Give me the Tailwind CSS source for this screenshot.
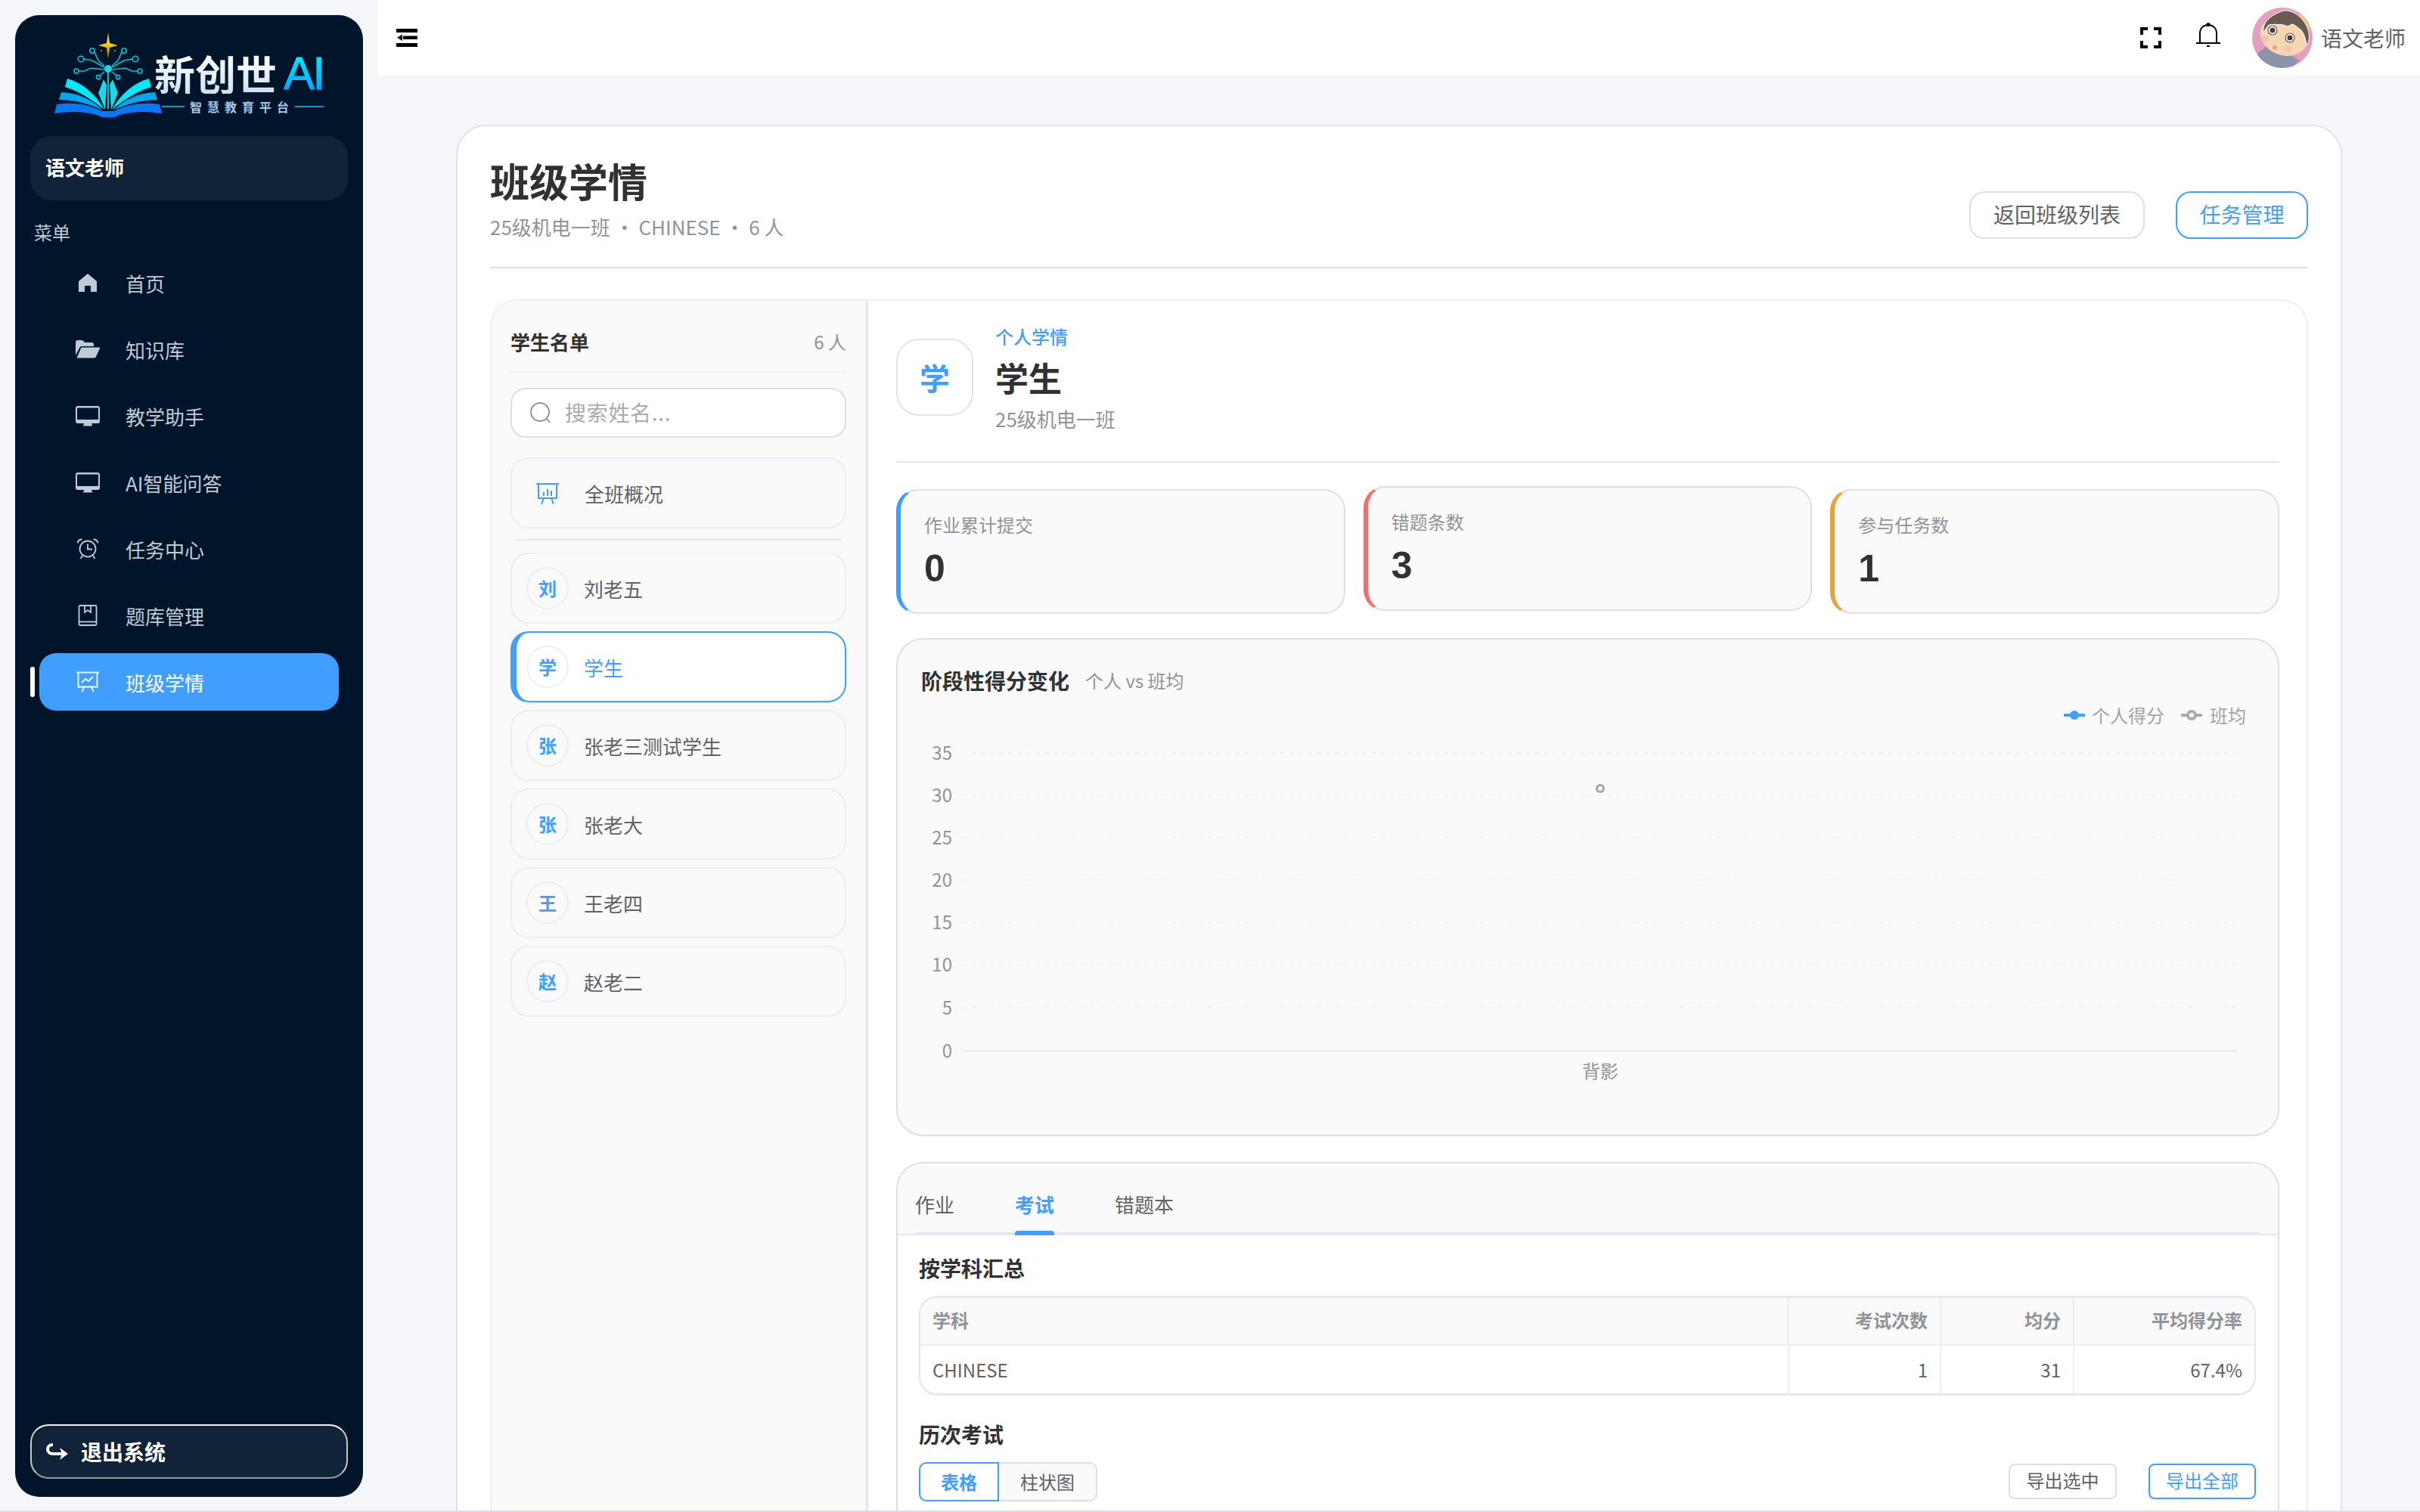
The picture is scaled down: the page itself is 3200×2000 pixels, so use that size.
<!DOCTYPE html>
<html lang="zh-CN">

<head>
    <meta charset="UTF-8">
    <title>班级学情</title>
    <script src="https://cdn.jsdelivr.net/npm/@tailwindcss/browser@4"></script>
</head>

<body class="bg-[#f5f6fa] font-['Noto_Sans_CJK_SC','Noto_Sans',sans-serif]">
    <div class="flex w-[3200px] h-[2000px] overflow-hidden border-b-2 border-[#dcdfe6]">
        <!-- Sidebar -->
        <div class="w-[500px] shrink-0 pt-[20px] pl-[20px] pr-[20px] pb-[18px]">
            <aside class="flex flex-col h-full rounded-[32px] bg-[#001529] px-[20px] pt-[22px] pb-[24px]">
                <!-- Logo -->
                <div class="flex items-start pl-[32px] h-[116px]">
                    <svg class="w-[133px] h-[116px] shrink-0 overflow-visible" viewBox="0 0 133 116">
                        <defs>
                            <linearGradient id="star" x1="0" y1="0" x2="0" y2="1">
                                <stop offset="0.4" stop-color="#ffd60a" />
                                <stop offset="1" stop-color="#a87800" />
                            </linearGradient>
                            <g id="half">
                                <path d="M17 62C38 68 54 82 66 103C50 90 34 79 14 73Z" fill="#00e8fa" />
                                <path d="M9 80C32 81 50 90 64 104C48 96 28 90 6 90Z" fill="#00a8f4" />
                                <path d="M3 96C28 92 50 98 63 105L71 105V113H63C50 106 24 104 0 108Z" fill="#0a78f5" />
                                <path d="M65 63L58 81L67 103L69 70Z" fill="#18d8ec" />
                                <g fill="none" stroke="#00c4d8" stroke-width="1.6">
                                    <path d="M53 27L58 38L66 45" />
                                    <path d="M39 36L50 38L66 47" />
                                    <path d="M32 52H40L48 48L66 50" />
                                    <path d="M60 58L66 53" />
                                    <circle cx="50" cy="25" r="3.2" />
                                    <circle cx="35" cy="36" r="3.8" />
                                    <circle cx="29" cy="52" r="3" />
                                    <circle cx="58" cy="60" r="2.6" />
                                </g>
                            </g>
                        </defs>
                        <use href="#half" />
                        <use href="#half" transform="translate(142 0) scale(-1 1)" />
                        <rect x="70" y="50" width="2" height="52" fill="#00c4d8" />
                        <circle cx="71" cy="49" r="5" fill="#18d8ec" />
                        <path d="M71 1L73 15L84 18L73 21L71 36L69 21L58 18L69 15Z" fill="url(#star)" />
                        <circle cx="62" cy="25" r="1" fill="#e0a800" />
                        <circle cx="80" cy="25" r="1" fill="#e0a800" />
                    </svg>
                    <div class="mt-[28px] -ml-[1px]">
                        <div class="flex items-center gap-[9px] h-[54px]">
                            <span class="text-[54px] leading-[54px] font-bold tracking-[0px] text-transparent bg-clip-text bg-linear-to-b from-white to-[#cfe0f2]">新创世</span>
                            <span class="font-['Liberation_Sans',sans-serif] text-[62px] leading-[54px] tracking-[-3px] text-transparent bg-clip-text bg-linear-to-b from-[#00f0ff] to-[#00a0ff] [-webkit-text-stroke:1px_transparent]">AI</span>
                        </div>
                        <div class="flex items-center mt-[7px] ml-[10px]">
                            <span class="w-[30px] h-[2px] bg-[#00a0c8]"></span>
                            <span class="w-[146px] pl-[7px] text-[16px] leading-[20px] font-bold tracking-[7px] text-[#a8c8e8] whitespace-nowrap">智慧教育平台</span>
                            <span class="w-[38px] h-[2px] bg-[#00a0c8]"></span>
                        </div>
                    </div>
                </div>

                <div class="mt-[22px] h-[85px] pb-[4px] rounded-[28px] bg-[#112338] pl-[20px] flex items-center text-white text-[26px] font-bold">语文老师</div>

                <div class="mt-[26px] pl-[5px] text-[24px] leading-[32px] text-[#c0cbd8]">菜单</div>

                <!-- Menu -->
                <nav class="mt-[13px] flex flex-col gap-[12px] text-[26px] text-[#c0cbd8]">
                    <a class="flex items-center h-[76px] mx-[12px] pl-[48px] gap-[34px]">
                        <svg class="w-[32px] h-[32px]" viewBox="0 0 1024 1024" fill="currentColor"><path d="M512 128 128 447.936V896h255.936V640H640v256h255.936V447.936z" /></svg>
                        首页
                    </a>
                    <a class="flex items-center h-[76px] mx-[12px] pl-[48px] gap-[34px]">
                        <svg class="w-[32px] h-[32px]" viewBox="0 0 32 32" fill="currentColor"><path d="M0 7a3 3 0 0 1 3-3h6l3 3h9a3 3 0 0 1 3 3v2H8a3 3 0 0 0-2.7 1.7L0 24Z" /><path d="M7.5 13.500H31a1 1 0 0 1 .9 1.400l-5 11a3 3 0 0 1-2.700 1.600H1.500Z" /></svg>
                        知识库
                    </a>
                    <a class="flex items-center h-[76px] mx-[12px] pl-[48px] gap-[34px]">
                        <svg class="w-[32px] h-[32px]" viewBox="0 0 32 32" fill="currentColor"><path fill-rule="evenodd" d="M3 3h26a3 3 0 0 1 3 3v17a3 3 0 0 1-3 3H3a3 3 0 0 1-3-3V6a3 3 0 0 1 3-3ZM3 5.500a1 1 0 0 0-1 1V21h28V6.500a1 1 0 0 0-1-1Z" /><path d="M11 26h10l1 3.500H10Z" /></svg>
                        教学助手
                    </a>
                    <a class="flex items-center h-[76px] mx-[12px] pl-[48px] gap-[34px]">
                        <svg class="w-[32px] h-[32px]" viewBox="0 0 32 32" fill="currentColor"><path fill-rule="evenodd" d="M3 3h26a3 3 0 0 1 3 3v17a3 3 0 0 1-3 3H3a3 3 0 0 1-3-3V6a3 3 0 0 1 3-3ZM3 5.500a1 1 0 0 0-1 1V21h28V6.500a1 1 0 0 0-1-1Z" /><path d="M11 26h10l1 3.500H10Z" /></svg>
                        AI智能问答
                    </a>
                    <a class="flex items-center h-[76px] mx-[12px] pl-[48px] gap-[34px]">
                        <svg class="w-[32px] h-[32px]" viewBox="0 0 32 32" fill="none" stroke="currentColor" stroke-width="1.800"><circle cx="16" cy="16" r="10.500" /><path d="M16 9.500V16.500H22" /><path d="M2.500 8.500C3 5 5 3.500 8.500 3.500" /><path d="M29.500 8.500C29 5 27 3.500 23.500 3.500" /><path d="M9 25L6.500 29M23 25L25.500 29" /></svg>
                        任务中心
                    </a>
                    <a class="flex items-center h-[76px] mx-[12px] pl-[48px] gap-[34px]">
                        <svg class="w-[32px] h-[32px]" viewBox="0 0 32 32" fill="none" stroke="currentColor" stroke-width="1.800"><rect x="4.500" y="3" width="23" height="26" rx="1.500" /><path d="M4.500 24.500H27.500" /><path d="M12 3V12L16 9L20 12V3" /></svg>
                        题库管理
                    </a>
                    <a class="relative flex items-center h-[76px] mx-[12px] pl-[48px] gap-[34px] rounded-[22px] bg-[#409eff] text-white">
                        <span class="absolute -left-[12px] top-[18px] w-[6px] h-[40px] rounded-full bg-white"></span>
                        <svg class="w-[32px] h-[32px]" viewBox="0 0 32 32" fill="none" stroke="currentColor" stroke-width="1.800"><path d="M1 3.500H31" /><path d="M3.500 3.500V22.500H28.500V3.500" /><path d="M8 17L13 12L17 15L23 9" /><path d="M11 22.500L8.500 29M21 22.500L23.500 29" /></svg>
                        班级学情
                    </a>
                </nav>

                <button class="mt-auto flex items-center h-[72px] pl-[19px] gap-[16px] rounded-[24px] border-2 border-t-[#f0f0f0] border-x-[#c8c8c8] border-b-[#999999] bg-[#112338] text-white text-[28px] font-bold">
                    <svg class="w-[30px] h-[24px]" viewBox="0 0 30 24" fill="none"><path d="M9 3C4 3 2 6 2 9C2 13 5 15 9 15H22" stroke="currentColor" stroke-width="4" /><path d="M18 7L29 15L18 23L21 15Z" fill="currentColor" /></svg>
                    退出系统
                </button>
            </aside>
        </div>

        <main class="flex-1 flex flex-col min-w-0">
            <!-- Header -->
            <header class="h-[100px] shrink-0 bg-white flex items-center pl-[24px] pr-[19px]">
                <svg class="w-[28px] h-[24px]" viewBox="0 0 28 24" fill="#000"><rect x="0" y="0" width="28" height="5" /><rect x="9" y="9.500" width="19" height="4.500" /><path d="M8 7.500L1 11.750L8 16Z" /><rect x="0" y="19" width="28" height="5" /></svg>
                <svg class="ml-auto w-[28px] h-[28px]" viewBox="0 0 28 28" fill="none" stroke="#000" stroke-width="4"><path d="M10 2H2V10M18 2H26V10M10 26H2V18M18 26H26V18" /></svg>
                <svg class="ml-[46px] w-[32px] h-[34px] -mt-[6px]" viewBox="0 0 32 34" fill="none" stroke="#000" stroke-width="2"><path d="M5 26V14C5 7 10 3 16 3C22 3 27 7 27 14V26" /><path d="M0 27H32" /><circle cx="16" cy="2.500" r="1.500" fill="#000" /><path d="M14 31H18" /></svg>
                <svg class="ml-[42px] w-[80px] h-[80px] rounded-full" viewBox="0 0 80 80">
                    <rect width="80" height="80" fill="#e59ec0" />
                    <path d="M60 0H80V28H68Z" fill="#eec48a" />
                    <path d="M5 64C12 55 20 50 28 48L62 70L52 80H14Z" fill="#8b93ad" />
                    <ellipse cx="42" cy="38" rx="32" ry="25" transform="rotate(20 42 38)" fill="#f6d7b4" />
                    <path d="M15 33C13 22 22 10 42 4C58 3 72 18 75 33C76 40 75 46 72 50C71 42 69 35 65 30C60 26 56 22 52 22C48 26 44 24 42 23C34 22 27 22 22 23C19 26 17 30 15 33Z" fill="#6b5a52" stroke="#fff" stroke-width="1" />
                    <circle cx="27" cy="30" r="6" fill="#fff" stroke="#6b5248" stroke-width="1.200" />
                    <circle cx="27" cy="30" r="3.500" fill="#4a3a34" />
                    <circle cx="50" cy="40" r="6" fill="#fff" stroke="#6b5248" stroke-width="1.200" />
                    <circle cx="50" cy="40" r="3.500" fill="#4a3a34" />
                    <ellipse cx="30" cy="53" rx="3" ry="2.500" fill="#e79a86" />
                    <ellipse cx="17" cy="41" rx="5" ry="4" fill="#f2c6a8" />
                    <ellipse cx="47" cy="54" rx="6" ry="4" fill="#f2c6a8" />
                </svg>
                <span class="ml-[11px] text-[28px] text-[#606266]">语文老师</span>
            </header>

            <!-- Content -->
            <div class="flex-1 min-h-0 overflow-hidden pt-[65px] pl-[103px] pr-[103px]">
                <div class="rounded-[40px] border-2 border-[#e0e3eb] bg-white px-[43px] pt-[36px]">
                    <div class="flex justify-between items-end pb-[35px] border-b-2 border-[#dcdfe6]">
                        <div>
                            <h1 class="text-[52px] leading-[72px] font-bold text-[#303133]">班级学情</h1>
                            <p class="mt-[7px] text-[26px] leading-[36px] text-[#909399]">25级机电一班 · CHINESE · 6 人</p>
                        </div>
                        <div class="flex gap-[41px] mb-[2px]">
                            <button class="h-[63px] w-[232px] pb-[3px] rounded-[20px] border-2 border-[#dcdfe6] text-[28px] text-[#606266]">返回班级列表</button>
                            <button class="h-[63px] w-[175px] pb-[3px] rounded-[20px] border-2 border-[#409eff] text-[28px] text-[#409eff]">任务管理</button>
                        </div>
                    </div>

                    <div class="mt-[41px] flex min-h-[1800px] rounded-[36px] border-2 border-[#ebeef5] overflow-hidden">
                        <!-- Student list -->
                        <div class="w-[498px] shrink-0 bg-[#fafafa] border-r-[3px] border-[#e4e7ed] pl-[25px] pr-[26px] pt-[36px]">
                            <div class="flex justify-between items-center pb-[21px] border-b-2 border-[#f0f2f5]">
                                <span class="text-[26px] leading-[36px] font-bold text-[#303133]">学生名单</span>
                                <span class="text-[24px] leading-[36px] text-[#909399]">6 人</span>
                            </div>
                            <div class="mt-[20px] h-[66px] pb-[3px] flex items-center rounded-[20px] border-2 border-[#dcdfe6] bg-white pl-[23px]">
                                <svg class="w-[30px] h-[30px] mt-[3px]" viewBox="0 0 30 30" fill="none" stroke="#909399" stroke-width="2"><circle cx="14" cy="14" r="12" /><path d="M23 23L27 28" /></svg>
                                <span class="ml-[17px] text-[28px] tracking-[0.7px] text-[#a8abb2]">搜索姓名...</span>
                            </div>
                            <div class="mt-[26px] h-[94px] flex items-center rounded-[24px] border-2 border-[#ebeef5] pl-[32px] gap-[34px] text-[26px] text-[#606266]">
                                <svg class="w-[30px] h-[32px]" viewBox="0 0 30 32" fill="none" stroke="#409eff" stroke-width="2"><path d="M0 4H30" /><path d="M3 4V23H27V4" /><path d="M10 20V15M15 20V11M20 20V13" /><path d="M10 23L7 31M20 23L23 31" /></svg>
                                全班概况
                            </div>
                            <div class="mt-[14px] mx-[7px] h-[2px] bg-[#e4e7ed]"></div>

                            <div class="mt-[16px] flex flex-col gap-[10px] text-[26px] text-[#606266]">
                                <div class="h-[94px] flex items-center rounded-[24px] border-2 border-[#ebeef5] pl-[19px] gap-[20px]">
                                    <span class="w-[56px] h-[56px] flex items-center justify-center rounded-full border-2 border-[#ebeef5] text-[24px] font-bold text-[#409eff]">刘</span>刘老五
                                </div>
                                <div class="h-[94px] flex items-center rounded-[24px] border-2 border-l-[8px] border-[#409eff] bg-white pl-[13px] gap-[20px] text-[#409eff]">
                                    <span class="w-[56px] h-[56px] flex items-center justify-center rounded-full border-2 border-[#ebeef5] text-[24px] font-bold">学</span>学生
                                </div>
                                <div class="h-[94px] flex items-center rounded-[24px] border-2 border-[#ebeef5] pl-[19px] gap-[20px]">
                                    <span class="w-[56px] h-[56px] flex items-center justify-center rounded-full border-2 border-[#ebeef5] text-[24px] font-bold text-[#409eff]">张</span>张老三测试学生
                                </div>
                                <div class="h-[94px] flex items-center rounded-[24px] border-2 border-[#ebeef5] pl-[19px] gap-[20px]">
                                    <span class="w-[56px] h-[56px] flex items-center justify-center rounded-full border-2 border-[#ebeef5] text-[24px] font-bold text-[#409eff]">张</span>张老大
                                </div>
                                <div class="h-[94px] flex items-center rounded-[24px] border-2 border-[#ebeef5] pl-[19px] gap-[20px]">
                                    <span class="w-[56px] h-[56px] flex items-center justify-center rounded-full border-2 border-[#ebeef5] text-[24px] font-bold text-[#409eff]">王</span>王老四
                                </div>
                                <div class="h-[94px] flex items-center rounded-[24px] border-2 border-[#ebeef5] pl-[19px] gap-[20px]">
                                    <span class="w-[56px] h-[56px] flex items-center justify-center rounded-full border-2 border-[#ebeef5] text-[24px] font-bold text-[#409eff]">赵</span>赵老二
                                </div>
                            </div>
                        </div>

                        <!-- Student detail -->
                        <div class="flex-1 min-w-0 flex flex-col pl-[37px] pr-[36px] pt-[31px]">
                            <div class="flex items-center gap-[29px] pb-[38px] border-b-2 border-[#e4e7ed]">
                                <div class="w-[102px] h-[102px] mb-[4px] flex items-center justify-center rounded-[30px] border-2 border-[#e0e3e9] text-[40px] font-bold text-[#409eff]">学</div>
                                <div>
                                    <div class="text-[24px] leading-[32px] font-medium text-[#409eff]">个人学情</div>
                                    <div class="mt-[8px] text-[44px] leading-[60px] font-bold text-[#303133]">学生</div>
                                    <div class="mt-[7px] text-[26px] leading-[36px] text-[#909399]">25级机电一班</div>
                                </div>
                            </div>

                            <div class="mt-[35px] grid grid-cols-3 gap-[24px]">
                                <div class="h-[165px] rounded-[28px] border-2 border-l-[6px] border-[#dcdfe6] border-l-[#409eff] bg-[#fafafa] pl-[31px] pt-[28px]">
                                    <div class="text-[24px] leading-[34px] text-[#909399]">作业累计提交</div>
                                    <div class="mt-[11px] font-['Liberation_Sans',sans-serif] text-[50px] leading-[60px] font-bold text-[#303133]">0</div>
                                </div>
                                <div class="h-[165px] -translate-y-[4px] rounded-[28px] border-2 border-l-[6px] border-[#dcdfe6] border-l-[#f56c6c] bg-[#fafafa] pl-[31px] pt-[28px]">
                                    <div class="text-[24px] leading-[34px] text-[#909399]">错题条数</div>
                                    <div class="mt-[11px] font-['Liberation_Sans',sans-serif] text-[50px] leading-[60px] font-bold text-[#303133]">3</div>
                                </div>
                                <div class="h-[165px] rounded-[28px] border-2 border-l-[6px] border-[#dcdfe6] border-l-[#e6a23c] bg-[#fafafa] pl-[31px] pt-[28px]">
                                    <div class="text-[24px] leading-[34px] text-[#909399]">参与任务数</div>
                                    <div class="mt-[11px] font-['Liberation_Sans',sans-serif] text-[50px] leading-[60px] font-bold text-[#303133]">1</div>
                                </div>
                            </div>

                            <!-- Chart -->
                            <div class="mt-[32px] h-[659px] shrink-0 rounded-[36px] border-2 border-[#dcdfe6] bg-[#fafafa] pt-[34px]">
                                <div class="flex items-center pl-[31px] gap-[21px]">
                                    <span class="text-[28px] leading-[40px] font-bold text-[#303133]">阶段性得分变化</span>
                                    <span class="text-[24px] text-[#909399]">个人 vs 班均</span>
                                </div>
                                <div class="mt-[10px] flex justify-end items-center pr-[42px] text-[24px] leading-[32px] text-[#a0a3a9]">
                                    <svg class="w-[28px] h-[16px]" viewBox="0 0 28 16"><path d="M0 8H28" stroke="#409eff" stroke-width="4" /><circle cx="14" cy="8" r="6" fill="#409eff" /></svg>
                                    <span class="ml-[9px]">个人得分</span>
                                    <svg class="ml-[22px] w-[28px] h-[16px]" viewBox="0 0 28 16"><path d="M0 8H28" stroke="#a8abb2" stroke-width="4" /><circle cx="14" cy="8" r="5" fill="#fafafa" stroke="#a8abb2" stroke-width="4" /></svg>
                                    <span class="ml-[10px]">班均</span>
                                </div>
                                <svg class="block w-[1825px] h-[495px]" viewBox="0 0 1825 495" font-size="24" fill="#909399">
                                    <g stroke="#f4f5f9" stroke-width="2" stroke-dasharray="8 4">
                                        <path d="M85 34H1771" />
                                        <path d="M85 90H1771" />
                                        <path d="M85 146H1771" />
                                        <path d="M85 202H1771" />
                                        <path d="M85 258H1771" />
                                        <path d="M85 314H1771" />
                                        <path d="M85 371H1771" />
                                    </g>
                                    <path d="M85 428H1771" stroke="#e8eaef" stroke-width="2" />
                                    <g text-anchor="end">
                                        <text x="72" y="43">35</text>
                                        <text x="72" y="99">30</text>
                                        <text x="72" y="155">25</text>
                                        <text x="72" y="211">20</text>
                                        <text x="72" y="267">15</text>
                                        <text x="72" y="323">10</text>
                                        <text x="72" y="380">5</text>
                                        <text x="72" y="437">0</text>
                                    </g>
                                    <circle cx="929" cy="81" r="4.500" fill="#fff" stroke="#a0a3a9" stroke-width="3" />
                                    <text x="929" y="464" text-anchor="middle">背影</text>
                                </svg>
                            </div>

                            <!-- Tabs -->
                            <div class="mt-[34px] flex-1 rounded-t-[36px] border-2 border-[#dcdfe6]">
                                <div class="h-[95px] flex flex-col justify-end rounded-t-[34px] bg-[#fafafa] border-b-2 border-[#e4e7ed]">
                                    <div class="mx-[23px] h-[72px] pt-[15px] flex gap-[80px] border-b-2 border-[#e4e7ed] text-[26px] text-[#606266]">
                                        <span class="leading-[36px]">作业</span>
                                        <span class="relative leading-[36px] font-bold text-[#409eff]">考试<span class="absolute left-0 right-0 -bottom-[4px] h-[6px] rounded-t-[4px] bg-[#409eff]"></span></span>
                                        <span class="leading-[36px]">错题本</span>
                                    </div>
                                </div>
                                <div class="pl-[28px] pr-[29px] pt-[23px]">
                                    <h3 class="text-[28px] leading-[40px] font-bold text-[#303133]">按学科汇总</h3>
                                    <div class="mt-[17px] rounded-[24px] border-2 border-y-[3px] border-[#e4e7ed] overflow-hidden">
                                        <table class="w-full table-fixed text-[24px]">
                                            <thead class="bg-[#fafafa] text-[#909399]">
                                                <tr class="h-[62px] border-b-2 border-[#ebeef5]">
                                                    <th class="w-[1148px] px-[16px] pb-[3px] text-left font-semibold border-r-2 border-[#ebeef5]">学科</th>
                                                    <th class="w-[201px] px-[16px] pb-[3px] text-right font-semibold border-r-2 border-[#ebeef5]">考试次数</th>
                                                    <th class="w-[176px] px-[16px] pb-[3px] text-right font-semibold border-r-2 border-[#ebeef5]">均分</th>
                                                    <th class="px-[16px] pb-[3px] text-right font-semibold">平均得分率</th>
                                                </tr>
                                            </thead>
                                            <tbody class="text-[#606266]">
                                                <tr class="h-[64px]">
                                                    <td class="px-[16px] border-r-2 border-[#ebeef5]">CHINESE</td>
                                                    <td class="px-[16px] text-right border-r-2 border-[#ebeef5]">1</td>
                                                    <td class="px-[16px] text-right border-r-2 border-[#ebeef5]">31</td>
                                                    <td class="px-[16px] text-right">67.4%</td>
                                                </tr>
                                            </tbody>
                                        </table>
                                    </div>
                                    <h3 class="mt-[31px] text-[28px] leading-[40px] font-bold text-[#303133]">历次考试</h3>
                                    <div class="mt-[17px] flex justify-between items-start">
                                        <div class="flex h-[52px] text-[24px]">
                                            <button class="w-[106px] rounded-l-[10px] border-2 border-[#409eff] bg-white font-bold text-[#409eff]">表格</button>
                                            <button class="w-[130px] rounded-r-[10px] border-2 border-l-0 border-[#dcdfe6] bg-[#fafafa] text-[#606266]">柱状图</button>
                                        </div>
                                        <div class="flex gap-[42px] mt-[2px] text-[24px]">
                                            <button class="w-[143px] h-[47px] pb-[3px] rounded-[8px] border-2 border-[#dcdfe6] text-[#606266]">导出选中</button>
                                            <button class="w-[142px] h-[47px] pb-[3px] rounded-[8px] border-2 border-[#409eff] text-[#409eff]">导出全部</button>
                                        </div>
                                    </div>
                                </div>
                            </div>
                        </div>
                    </div>
                </div>
            </div>
        </main>
    </div>
</body>

</html>
